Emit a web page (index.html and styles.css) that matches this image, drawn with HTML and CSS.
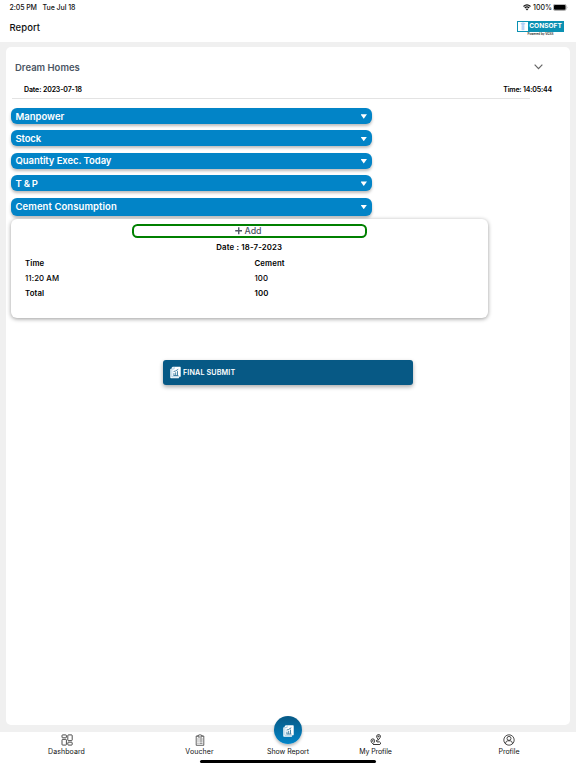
FILE: index.html
```html
<!DOCTYPE html>
<html lang="en">
<head>
<meta charset="utf-8">
<title>Report</title>
<link rel="stylesheet" href="styles.css">
</head>
<body>
<svg class="defs" width="0" height="0">
  <symbol id="report" viewBox="0 0 12 13">
    <path d="M3 .3h8q.7 0 .7.700v9.500q0 .7-.7.700H10v.8q0 .7-.7.700H1q-.7 0-.7-.7V3q0-.7.7-.7h.8V1.300z" fill="#fff"/>
    <path d="M2 2.500v8.700h8M4.500.500v2.200H2.200" fill="none" stroke="#5b9fc9" stroke-width=".5"/>
    <path d="M4.300 9.500V7.200M6.200 9.500V6.300M8.200 9.500V5M3.900 5.500l2-.6L9 3M3.700 9.800h5.500" fill="none" stroke="#075985" stroke-width=".8"/>
  </symbol>
</svg>
<header class="top">
  <div class="status">
    <span class="clock">2:05 PM</span><span class="day">Tue Jul 18</span>
    <svg class="wifi" viewBox="0 0 8 7"><path d="M.5 2.500Q4-.8 7.500 2.500M1.800 4Q4 1.900 6.200 4" fill="none" stroke="#111" stroke-width="1.200"/><path d="M2.700 5Q4 3.900 5.300 5L4 6.500z" fill="#111"/></svg>
    <span class="percent">100%</span>
    <svg class="battery" viewBox="0 0 15 7"><rect x=".3" y=".3" width="12.900" height="6.200" rx="1.700" fill="#ddd" stroke="#777" stroke-width=".5"/><rect x="1" y="1" width="11.500" height="4.800" rx="1" fill="#000"/><path d="M14 2.400q.8.900 0 1.900z" fill="#777"/></svg>
  </div>
  <div class="titlebar">
    <h1>Report</h1>
    <div class="logo">
      <div class="mark">
        <svg viewBox="0 0 10 10"><path d="M5 .8v8.400M3 2.500h4M4 9V3.500M6 9V3.500M2.500 1.800L5 1l2.500.8" fill="none" stroke="#8bb4f2" stroke-width=".7"/></svg>
        <span>CONSOFT</span>
      </div>
      <small>Powered by VGSS</small>
    </div>
  </div>
</header>
<main class="card">
  <div class="project"><h2>Dream Homes</h2><svg viewBox="0 0 8 5"><path d="M.5.600L4 4.200 7.500.600" fill="none" stroke="#666" stroke-width="1.100"/></svg></div>
  <div class="stamp"><span class="date">Date: 2023-07-18</span><span class="time">Time: 14:05:44</span></div>
  <hr>
  <div class="sections">
    <div class="bar"><span class="manpower">Manpower</span><i></i></div>
    <div class="bar"><span class="stock">Stock</span><i></i></div>
    <div class="bar"><span class="quantity">Quantity Exec. Today</span><i></i></div>
    <div class="bar"><span class="tools">T &amp; P</span><i></i></div>
    <div class="bar open"><span class="cement">Cement Consumption</span><i></i></div>
  </div>
  <section class="panel">
    <div class="add"><svg viewBox="0 0 7 7"><path d="M3.500.2v6.600M.2 3.500h6.600" stroke="#4b5563" stroke-width="1.300"/></svg><span>Add</span></div>
    <div class="caption">Date : 18-7-2023</div>
    <div class="row strong"><span>Time</span><span>Cement</span></div>
    <div class="row"><span>11:20 AM</span><span>100</span></div>
    <div class="row strong"><span>Total</span><span>100</span></div>
  </section>
  <div class="submit"><svg><use href="#report"/></svg><span>FINAL SUBMIT</span></div>
</main>
<nav class="tabs">
  <div class="tab t1"><svg viewBox="0 0 12 12"><g fill="none" stroke="#222" stroke-width=".8"><rect x="1" y=".9" width="4.400" height="2.900" rx=".7"/><rect x="1" y="5.400" width="4.400" height="5.700" rx=".7"/><rect x="6.800" y=".9" width="4.400" height="5.700" rx=".7"/><rect x="6.800" y="8.200" width="4.400" height="2.900" rx=".7"/></g></svg><span>Dashboard</span></div>
  <div class="tab t2"><svg viewBox="0 0 12 12"><g fill="none" stroke="#222" stroke-width=".7"><path d="M4 2H2.200v9.300h7.600V2H8M4 1.300h1L6 .5l1 .8h1v1.700H4zM3.500 5h1M5.500 5h3M3.500 7h1M5.500 7h3M3.500 9.200h1M5.500 9.200h3"/></g></svg><span>Voucher</span></div>
  <div class="tab t3"><div class="bubble"><svg><use href="#report"/></svg></div><span>Show Report</span></div>
  <div class="tab t4"><svg viewBox="0 0 12 12"><g fill="none" stroke="#222" stroke-width=".9"><path d="M8.500 5.700Q6.300 3.500 6.700 2a1.900 1.900 0 0 1 3.700 0Q10.700 3.500 8.500 5.700zM2.800 9.800Q.9 8.200 1 6.700a1.800 1.800 0 0 1 3.600 0Q4.700 8.200 2.800 9.800zM8.500 6H7Q5.500 7 7 7.900h2.600q2.200 1 .3 2.600H3"/><circle cx="8.500" cy="2.400" r=".5"/><circle cx="2.800" cy="6.900" r=".4"/></g></svg><span>My Profile</span></div>
  <div class="tab t5"><svg viewBox="0 0 12 12"><g fill="none" stroke="#222" stroke-width=".8"><circle cx="6" cy="6" r="5.200"/><circle cx="6" cy="4.400" r="2"/><path d="M2.600 9.900V9Q3 7 4.700 6.800h2.600Q9 7 9.400 9v.9"/></g></svg><span>Profile</span></div>
  <div class="home"></div>
</nav>
</body>
</html>
```
FILE: styles.css
```css
* { box-sizing: border-box; }
body { margin: 0; width: 576px; height: 768px; overflow: hidden; background: #f0f0f0; color: #111; font-family: Inter, "Liberation Sans", sans-serif; display: flex; flex-direction: column; }
h1, h2, hr { margin: 0; }
span, h1, h2, small, .caption { white-space: nowrap; }
svg { display: block; flex: none; }
.defs { position: absolute; }
.top { height: 42px; background: #fff; flex: none; }
.status { height: 14px; display: flex; align-items: center; padding: 1px 0 0 9.5px; font-size: 7px; font-weight: 500; line-height: 13px; }
.clock { width: 33px; letter-spacing: -.1px; }
.day { letter-spacing: -.05px; }
.wifi { width: 8px; height: 7px; margin-left: auto; }
.percent { width: 18px; margin: 0 2px; }
.battery { width: 15px; height: 7px; margin-right: 8px; }
.titlebar { display: flex; justify-content: space-between; padding: 6px 12px 0 9.5px; }
h1 { font-size: 9.5px; line-height: 16px; font-weight: 500; letter-spacing: .05px; }
.logo { width: 47px; padding-top: 1px; display: flex; flex-direction: column; align-items: center; }
.mark { width: 47px; height: 11px; border: 1px solid #0b91b3; display: flex; background: #fff; }
.mark svg { width: 10px; height: 9px; }
.mark span { flex: 1; background: #0b91b3; color: #fff; font: 700 6.6px/9px Inter, sans-serif; text-align: center; }
.logo small { font-size: 3px; line-height: 5px; font-weight: 600; }
.card { width: 564px; height: 678px; margin: 5px 6px 0; padding: 11px 4.5px 0; background: #fff; border-radius: 5px; flex: none; }
.project { height: 18px; display: flex; justify-content: space-between; align-items: center; padding: 0 23px 0 4.5px; color: #4b5563; }
h2 { font-size: 9.5px; font-weight: 600; }
.project svg { width: 9px; height: 5.5px; }
.stamp { height: 22px; padding: 7px 13.5px 0 13.5px; display: flex; justify-content: space-between; font-size: 7px; line-height: 14px; font-weight: 600; color: #000; }
.date { letter-spacing: -.12px; }
.time { letter-spacing: -.18px; }
hr { width: 518px; margin-left: 1px; height: 1px; border: 0; background: #e3e3e3; }
.sections { display: flex; flex-direction: column; gap: 6.4px; padding: 9px 0 0 .5px; width: 361.5px; }
.bar { height: 16px; background: #0284c7; border-radius: 6px; box-shadow: 0 2px 3px #0004; padding: 0 5px 0 4.5px; color: #fff; display: flex; align-items: center; justify-content: space-between; font-size: 9.5px; font-weight: 600; }
.bar.open { height: 18px; }
.stock { letter-spacing: -.15px; }
.quantity { letter-spacing: -.07px; }
.tools { letter-spacing: -.25px; }
.cement { letter-spacing: .08px; }
.bar i { width: 6.5px; height: 4.5px; margin-top: 1px; background: #fff; clip-path: polygon(0 0, 100% 0, 50% 100%); }
.panel { width: 477.5px; height: 99px; margin-top: 3.4px; padding-top: 5px; border-radius: 6px; background: #fff; box-shadow: 0 1px 4px #0006; position: relative; font-size: 7.8px; color: #000; }
.add { width: 234.5px; height: 14px; margin: 0 auto; border: 2px solid green; border-radius: 5.5px; display: flex; align-items: center; justify-content: center; gap: 2px; padding-right: 2px; font-size: 8.8px; font-weight: 500; color: #4b5563; line-height: 10px; }
.add svg { width: 7.5px; height: 7.5px; }
.caption { text-align: center; font-weight: 600; line-height: 15px; padding-top: 2px; letter-spacing: .17px; }
.row { display: grid; grid-template-columns: 229.5px 1fr; padding-left: 14.5px; height: 15.2px; line-height: 17px; font-weight: 500; letter-spacing: .1px; }
.row.strong { font-weight: 600; letter-spacing: .12px; }
.submit { width: 250px; height: 25px; margin: 42px 0 0 152.5px; background: #075985; border-radius: 3px; box-shadow: 0 2px 4px #0005; display: flex; align-items: center; gap: 2px; padding-left: 7px; color: #fff; font-size: 7.2px; font-weight: 600; letter-spacing: .12px; }
.submit svg { width: 11px; height: 13px; }
.tabs { position: relative; flex: none; height: 37px; margin-top: 6.5px; background: #fff; display: flex; justify-content: space-between; padding: 0 27px 0 26px; }
.tab { width: 80px; display: flex; flex-direction: column; align-items: center; padding-top: 2px; font-size: 7px; line-height: 11px; letter-spacing: .1px; }
.tab > svg { width: 12px; height: 12px; }
.tab > span { margin-top: .2px; }
.tab.t1 { padding-left: 1px; }
.tab.t2 { margin-left: 53px; }
.tab.t3 { margin-left: 8px; letter-spacing: -.03px; }
.tab.t4 { margin-left: 7px; letter-spacing: -.1px; }
.tab.t5 { margin-left: 53px; letter-spacing: -.05px; }
.bubble { width: 28px; height: 28px; margin-top: -18px; margin-bottom: 2px; border-radius: 50%; background: linear-gradient(#075985, #0284c7); box-shadow: 0 2px 3px #0004; display: flex; align-items: center; justify-content: center; flex: none; }
.bubble svg { width: 11px; height: 12px; margin-top: 3px; }
.home { position: absolute; left: 200px; top: 28.5px; width: 176px; height: 3px; border-radius: 2px; background: #000; }
```
